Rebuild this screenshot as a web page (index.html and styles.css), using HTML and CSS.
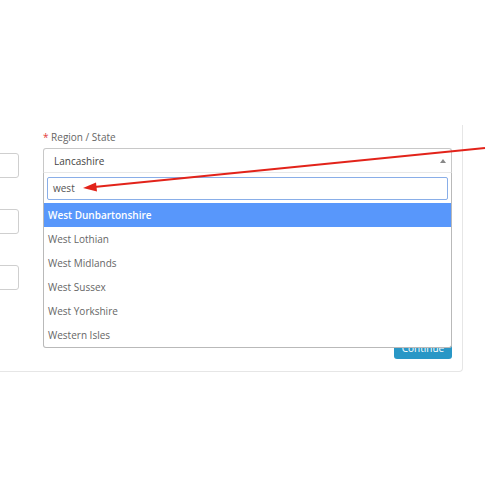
FILE: index.html
```html
<!DOCTYPE html>
<html>
<head>
<meta charset="utf-8">
<link rel="stylesheet" href="styles.css">
</head>
<body>
<div class="panel">
  <div class="col-left">
    <div class="input"></div>
    <div class="input"></div>
    <div class="input"></div>
  </div>
  <div class="col-right">
    <div class="label"><span class="req">*</span> Region / State</div>
    <div class="select">
      <span class="value">Lancashire</span>
      <span class="caret"></span>
    </div>
    <div class="actions">
      <div class="btn">Continue</div>
    </div>
    <div class="dropdown">
      <div class="search">west</div>
      <ul class="results">
        <li class="hl">West Dunbartonshire</li>
        <li>West Lothian</li>
        <li>West Midlands</li>
        <li>West Sussex</li>
        <li>West Yorkshire</li>
        <li>Western Isles</li>
      </ul>
    </div>
  </div>
</div>
<svg class="arrow" width="500" height="500" viewBox="0 0 500 500">
  <line x1="485" y1="148" x2="94" y2="187" stroke="#e2231a" stroke-width="2"/>
  <polygon points="83,188 96,182.5 97,191.5" fill="#e2231a"/>
</svg>
</body>
</html>
```
FILE: styles.css
```css
html, body {
  margin: 0;
  padding: 0;
  background: #fff;
  font-family: "Open Sans", "Liberation Sans", sans-serif;
  font-size: 10px;
  color: #555;
}
.panel {
  margin: 125px 0 0 -40px;
  width: 503px;
  box-sizing: border-box;
  border: 1px solid #e6e6e6;
  border-top: none;
  border-radius: 0 0 4px 4px;
  padding: 0 10px 12px 20px;
  display: flex;
  gap: 24px;
}
.col-left {
  width: 38px;
  padding-top: 28px;
  display: flex;
  flex-direction: column;
  gap: 31px;
}
.input {
  height: 25px;
  box-sizing: border-box;
  border: 1px solid #cfcfcf;
  border-radius: 3px;
  background: #fff;
}
.col-right {
  width: 409px;
  position: relative;
  padding-top: 5px;
}
.label {
  height: 14px;
  line-height: 14px;
  color: #666;
  margin-bottom: 4px;
}
.req { color: #e23b3b; }
.select {
  height: 25px;
  box-sizing: border-box;
  border: 1px solid #c8c8c8;
  border-bottom-color: #e8e8e8;
  border-radius: 3px 3px 0 0;
  display: flex;
  align-items: center;
  justify-content: space-between;
  padding: 0 5px 0 10px;
  color: #444;
}
.caret {
  width: 0;
  height: 0;
  border-left: 3px solid transparent;
  border-right: 3px solid transparent;
  border-bottom: 4px solid #888;
}
.actions {
  margin-top: 164px;
  display: flex;
  justify-content: flex-end;
}
.btn {
  width: 58px;
  height: 22px;
  line-height: 22px;
  text-align: center;
  background: #2997c6;
  color: #fff;
  border-radius: 0 0 3px 3px;
}
.dropdown {
  position: absolute;
  top: 48px;
  left: 0;
  width: 409px;
  box-sizing: border-box;
  background: #fff;
  border: 1px solid #b9b9b9;
  border-top: none;
  border-radius: 0 0 3px 3px;
}
.search {
  margin: 4px 3px 3px 3px;
  height: 23px;
  box-sizing: border-box;
  border: 1px solid #89aee8;
  border-radius: 2px;
  line-height: 21px;
  padding-left: 5px;
  color: #555;
}
.results {
  list-style: none;
  margin: 0;
  padding: 0;
}
.results li {
  height: 24px;
  line-height: 24px;
  padding-left: 4px;
  color: #666;
}
.results li.hl {
  background: #5897fb;
  color: #fff;
  font-weight: 600;
}
.arrow {
  position: absolute;
  left: 0;
  top: 0;
  pointer-events: none;
}
```
